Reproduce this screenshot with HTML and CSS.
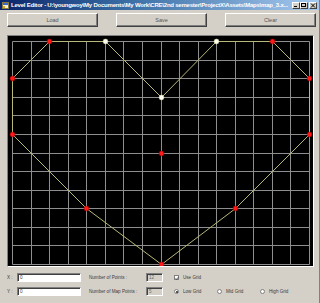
FILE: index.html
```html
<!DOCTYPE html>
<html>
  <head>
    <meta name="viewport" content="width=device-width, initial-scale=1" />
    <link rel="stylesheet" href="styles.css">
  </head>
  <body>
    <div class="window">
      <div class="titlebar">
        <svg class="app_icon" width="7" height="7" viewBox="0 0 7 7">
          <rect x="0.5" y="0.5" width="6" height="6" fill="#f4f0d8" stroke="#8a7a40" stroke-width="1" />
          <rect x="1" y="1" width="5" height="2" fill="#3a6ad0" />
          <rect x="1" y="4" width="2" height="2" fill="#e0a020" />
        </svg>
        <span class="title">Level Editor - U:\youngwoy\My Documents\My Work\CRE\2nd semester\ProjectX\Assets\Maps\map_3.x...</span>
        <div class="caption_buttons">
          <span class="cap">
            <svg width="8" height="7" viewBox="0 0 8 7"><rect x="2" y="4" width="3" height="1" fill="#000" /></svg>
          </span>
          <span class="cap">
            <svg width="8" height="7" viewBox="0 0 8 7"><rect x="1.5" y="1.5" width="4" height="3" fill="none" stroke="#000" stroke-width="1" /><rect x="1" y="1" width="5" height="1" fill="#000" /></svg>
          </span>
          <span class="cap close">
            <svg width="8" height="7" viewBox="0 0 8 7"><path d="M2 1.5 L6 5.5 M6 1.5 L2 5.5" stroke="#000" stroke-width="1" /></svg>
          </span>
        </div>
      </div>

      <div class="toolbar">
        <button class="btn">Load</button>
        <button class="btn">Save</button>
        <button class="btn">Clear</button>
      </div>

      <div class="canvas">
        <svg id="grid" width="305" height="230"></svg>
      </div>

      <div class="form">
        <span class="lbl">X :</span>
        <span class="coord">0</span>
        <span class="lbl">Number of Points :</span>
        <span class="count">12</span>
        <span class="option"><span class="checkbox">
          <svg width="5" height="5" viewBox="0 0 5 5"><path d="M0.8 2.2 L2 3.6 L4.3 0.8" fill="none" stroke="#333" stroke-width="0.9" /></svg>
        </span>Use Grid</span>
        <span></span>
        <span></span>

        <span class="lbl">Y :</span>
        <span class="coord">0</span>
        <span class="lbl">Number of Map Points :</span>
        <span class="count">5</span>
        <span class="option"><span class="radio checked"></span>Low Grid</span>
        <span class="option"><span class="radio"></span>Mid Grid</span>
        <span class="option"><span class="radio"></span>High Grid</span>
      </div>
    </div>

    <script>
      var svg = document.getElementById("grid");
      var ns = "http://www.w3.org/2000/svg";
      var cols = 16;
      var rows = 12;
      var x0 = 4;
      var y0 = 5;
      var cw = 297 / cols;
      var ch = 223 / rows;

      function gx(c) {
        return Math.round(x0 + c * cw) + 0.5;
      }
      function gy(r) {
        return Math.round(y0 + r * ch) + 0.5;
      }
      function el(name, attrs) {
        var node = document.createElementNS(ns, name);
        for (var k in attrs) node.setAttribute(k, attrs[k]);
        svg.appendChild(node);
        return node;
      }

      // grid
      for (var i = 0; i <= cols; i++) {
        el("line", { x1: gx(i), y1: gy(0), x2: gx(i), y2: gy(rows), stroke: "#8e8e8e", "stroke-width": 1 });
      }
      for (var j = 0; j <= rows; j++) {
        el("line", { x1: gx(0), y1: gy(j), x2: gx(cols), y2: gy(j), stroke: "#8e8e8e", "stroke-width": 1 });
      }

      // map outline
      var points = [[8, 3], [11, 0], [14, 0], [16, 2], [16, 5], [12, 9], [8, 12], [4, 9], [0, 5], [0, 2], [2, 0], [5, 0]];
      var white = [0, 1, 11];
      var d = points.map(function (p) { return gx(p[0]) + "," + gy(p[1]); }).join(" ");
      el("polygon", { points: d, fill: "none", stroke: "#b8b878", "stroke-width": 1 });

      points.push([8, 6]);
      points.forEach(function (p, n) {
        var isWhite = white.indexOf(n) >= 0;
        el("circle", {
          cx: gx(p[0]), cy: gy(p[1]), r: 2.4,
          fill: isWhite ? "#fffff0" : "#ff1a1a",
          stroke: isWhite ? "#d8d8b0" : "#b00000",
          "stroke-width": 0.6
        });
      });
    </script>
  </body>
</html>
```

FILE: styles.css
```css
body {
  margin: 0;
  background-color: #d4d0c8;
  font-family: "Liberation Sans", Arial, sans-serif;
}

.window {
  width: 320px;
  height: 303px;
  box-sizing: border-box;
  background-color: #d4d0c8;
  border-right: 1px solid #808080;
  display: flex;
  flex-direction: column;
}

.titlebar {
  height: 10px;
  display: flex;
  align-items: center;
  padding: 0 2px 0 2px;
  background: linear-gradient(to right, #0a246a, #3a6ea5 40%, #a6caf0);
}

.app_icon {
  flex: none;
  margin-right: 2px;
}

.title {
  flex: 1;
  color: #ffffff;
  font-weight: bold;
  font-size: 6px;
  letter-spacing: -0.22px;
  white-space: nowrap;
}

.caption_buttons {
  display: flex;
  flex: none;
}

.cap {
  width: 8px;
  height: 7px;
  box-sizing: border-box;
  background-color: #d4d0c8;
  border-top: 1px solid #ffffff;
  border-left: 1px solid #ffffff;
  border-right: 1px solid #404040;
  border-bottom: 1px solid #404040;
  display: flex;
  overflow: hidden;
}

.cap svg {
  margin: -1px;
}

.close {
  margin-left: 1px;
}

.toolbar {
  display: flex;
  gap: 18px;
  padding: 3px 0 0 7px;
}

.btn {
  width: 91px;
  height: 14px;
  padding: 0;
  background-color: #d4d0c8;
  border-top: 1px solid #ffffff;
  border-left: 1px solid #ffffff;
  border-right: 1px solid #404040;
  border-bottom: 1px solid #404040;
  box-shadow: inset -1px -1px 0 #808080;
  font-family: "Liberation Sans", Arial, sans-serif;
  font-size: 5.5px;
  color: #555555;
}

.canvas {
  margin: 8px 0 0 7px;
  width: 305px;
  height: 230px;
  background-color: #000000;
  border-top: 1px solid #808080;
  border-left: 1px solid #808080;
  border-right: 1px solid #ffffff;
  border-bottom: 1px solid #ffffff;
}

#grid {
  display: block;
}

.form {
  display: grid;
  grid-template-columns: 10px 72px 57px 28px 43px 43px 1fr;
  grid-template-rows: 9px 9px;
  row-gap: 5px;
  margin: 6px 0 0 7px;
  font-size: 4.6px;
  color: #3a3a3a;
  align-items: center;
}

.lbl {
  white-space: nowrap;
}

.coord,
.count {
  height: 9px;
  box-sizing: border-box;
  border-top: 1px solid #808080;
  border-left: 1px solid #808080;
  border-right: 1px solid #ffffff;
  border-bottom: 1px solid #ffffff;
  box-shadow: inset 1px 1px 0 #404040;
  background-color: #ffffff;
  padding: 1px 0 0 2px;
  line-height: 6px;
}

.coord {
  width: 64px;
}

.count {
  width: 17px;
  background-color: #d4d0c8;
  color: #6a6a6a;
}

.option {
  display: flex;
  align-items: center;
  white-space: nowrap;
}

.checkbox {
  width: 5px;
  height: 5px;
  box-sizing: border-box;
  margin-right: 4px;
  background-color: #ffffff;
  border: 0.5px solid #808080;
  display: flex;
}

.checkbox svg {
  margin: -0.5px;
}

.radio {
  width: 5px;
  height: 5px;
  box-sizing: border-box;
  margin-right: 4px;
  border-radius: 50%;
  background-color: #ffffff;
  border: 0.5px solid #808080;
  position: relative;
}

.checked::after {
  content: "";
  position: absolute;
  left: 1px;
  top: 1px;
  width: 2px;
  height: 2px;
  border-radius: 50%;
  background-color: #222222;
}
```
